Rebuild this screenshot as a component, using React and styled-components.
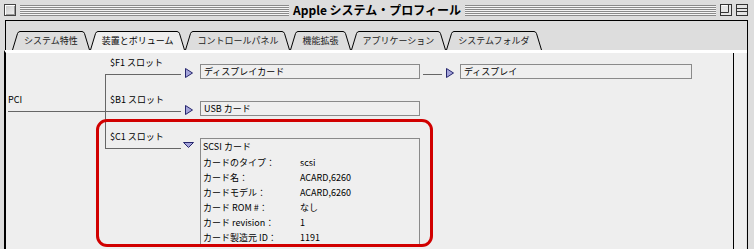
import React from "react"
import styled, { createGlobalStyle } from "styled-components"

const GlobalStyle = createGlobalStyle`
  *, *::before, *::after { box-sizing: border-box; }
  html, body { margin: 0; padding: 0; background: #dddddd; }
  body {
    font-family: "Noto Sans CJK JP", "Noto Sans", sans-serif;
    color: #000;
  }
`

const tabs = [
  "システム特性",
  "装置とボリューム",
  "コントロールパネル",
  "機能拡張",
  "アプリケーション",
  "システムフォルダ",
]

const details = [
  ["カードのタイプ：", "scsi"],
  ["カード名：", "ACARD,6260"],
  ["カードモデル：", "ACARD,6260"],
  ["カード ROM #：", "なし"],
  ["カード revision：", "1"],
  ["カード製造元 ID：", "1191"],
]

const RightArrow = () => (
  <svg width="8" height="10" viewBox="0 0 8 10">
    <polygon points="0.5,0.5 7.5,5 0.5,9.5" fill="#a4a4da" stroke="#26266e" />
  </svg>
)

const DownArrow = () => (
  <svg width="11" height="6" viewBox="0 0 11 6">
    <polygon points="0.5,0.5 10.5,0.5 5.5,5.5" fill="#a4a4da" stroke="#26266e" />
  </svg>
)

const ZoomIcon = () => (
  <svg width="12" height="12" viewBox="0 0 12 12">
    <rect x="0.5" y="0.5" width="11" height="11" fill="#e4e4e4" stroke="#333" />
    <path d="M0.5,8.5 H8.5 V0.5" fill="none" stroke="#333" />
    <path d="M1.5,1.5 H7.5" stroke="#fff" />
  </svg>
)

const ShadeIcon = () => (
  <svg width="12" height="12" viewBox="0 0 12 12">
    <rect x="0.5" y="0.5" width="11" height="11" fill="#e4e4e4" stroke="#333" />
    <path d="M0.5,4.5 H11.5 M0.5,7.5 H11.5" stroke="#333" />
  </svg>
)

const Tab = ({ label, active }) => {
  const fill = active ? "#eeeeee" : "#dddddd"
  return (
    <TabShape>
      <svg width="8" height="19" viewBox="0 0 8 19">
        <path d="M0,19 L5.5,2.5 Q6.3,0.5 8,0.5 L8,19 Z" fill={fill} />
        <path d="M0.5,19 L5.5,2.5 Q6.3,0.5 8,0.5" fill="none" stroke="#000" />
      </svg>
      <TabLabel $active={active}>{label}</TabLabel>
      <svg width="8" height="19" viewBox="0 0 8 19">
        <path d="M0,0.5 Q1.7,0.5 2.5,2.5 L8,19 L0,19 Z" fill={fill} />
        <path d="M0,0.5 Q1.7,0.5 2.5,2.5 L7.5,19" fill="none" stroke="#000" />
      </svg>
    </TabShape>
  )
}

const App = () => {
  return (
    <>
      <GlobalStyle />
      <Window>
        <TitleBar>
          <Cap>
            <CloseBox />
            <Stripes />
          </Cap>
          <Title>Apple システム・プロフィール</Title>
          <Cap $right>
            <Stripes />
            <ZoomIcon />
            <ShadeIcon />
          </Cap>
        </TitleBar>

        <Frame>
          <TabRow>
            {tabs.map(t => (
              <Tab key={t} label={t} active={t === "装置とボリューム"} />
            ))}
          </TabRow>

          <Panel>
            <Content>
              <Tree>
                <Root>PCI</Root>
                <SlotList>
                  <SlotRow>
                    <Branch $pos="first">$F1 スロット</Branch>
                    <ArrowCell $pad={4}>
                      <RightArrow />
                    </ArrowCell>
                    <NameBox $w={220}>ディスプレイカード</NameBox>
                    <Link />
                    <ArrowCell $pad={4} $w={18}>
                      <RightArrow />
                    </ArrowCell>
                    <NameBox $w={232}>ディスプレイ</NameBox>
                  </SlotRow>

                  <SlotRow>
                    <Branch $pos="middle">$B1 スロット</Branch>
                    <ArrowCell $pad={4}>
                      <RightArrow />
                    </ArrowCell>
                    <NameBox $w={220}>USB カード</NameBox>
                  </SlotRow>

                  <SlotRow>
                    <Branch $pos="last">$C1 スロット</Branch>
                    <ArrowCell $pad={2}>
                      <DownArrow />
                    </ArrowCell>
                    <DetailBox>
                      <DetailTitle>SCSI カード</DetailTitle>
                      <DetailGrid>
                        {details.map(([k, v]) => (
                          <React.Fragment key={k}>
                            <span>{k}</span>
                            <span>{v}</span>
                          </React.Fragment>
                        ))}
                      </DetailGrid>
                    </DetailBox>
                  </SlotRow>
                </SlotList>
              </Tree>
              <Highlight />
            </Content>
            <ScrollStrip />
          </Panel>
        </Frame>
      </Window>
    </>
  )
}

const Window = styled.div`
  width: 754px;
  height: 249px;
  overflow: hidden;
  display: flex;
  flex-direction: column;
  background: #dddddd;
`

const TitleBar = styled.div`
  height: 20px;
  display: grid;
  grid-template-columns: 1fr auto 1fr;
  align-items: center;
`

const Cap = styled.div`
  display: flex;
  align-items: center;
  gap: 4px;
  padding: ${p => (p.$right ? "0 6px 0 0" : "0 0 0 4px")};
`

const CloseBox = styled.div`
  width: 12px;
  height: 12px;
  border: 1px solid #444;
  background: linear-gradient(135deg, #c8c8c8, #f2f2f2);
  box-shadow: inset 1px 1px #fff, inset -1px -1px #999;
`

const Stripes = styled.div`
  flex: 1;
  height: 11px;
  background: repeating-linear-gradient(
    to bottom,
    #8a8a8a 0 1px,
    #f4f4f4 1px 2px
  );
`

const Title = styled.div`
  font-size: 12px;
  font-weight: bold;
  line-height: 20px;
  padding: 0 4px;
  white-space: nowrap;
`

const Frame = styled.div`
  flex: 1;
  min-height: 0;
  display: flex;
  flex-direction: column;
  margin: 0 6px 0 5px;
  border: 1px solid #000;
  border-bottom: none;
`

const TabRow = styled.div`
  height: 29px;
  display: flex;
  align-items: flex-end;
  padding-left: 6px;
`

const TabShape = styled.div`
  display: flex;
  height: 19px;
  svg {
    display: block;
  }
`

const TabLabel = styled.div`
  height: 19px;
  padding: 0 4px;
  border-top: 1px solid #000;
  background: ${p => (p.$active ? "#eeeeee" : "#dddddd")};
  color: ${p => (p.$active ? "#000" : "#222")};
  font-size: 9px;
  line-height: 18px;
  white-space: nowrap;
`

const Panel = styled.div`
  flex: 1;
  min-height: 0;
  display: flex;
  margin-left: -2px;
  border-left: 2px solid #000;
  border-top: 3px solid #fff;
`

const Content = styled.div`
  flex: 1;
  position: relative;
  overflow: hidden;
  background: #eeeeee;
  border-right: 1px solid #000;
`

const ScrollStrip = styled.div`
  width: 13px;
  background: #eeeeee;
  border-right: 1px solid #e2e2e2;
`

const Tree = styled.div`
  display: flex;
  align-items: flex-start;
  padding-top: 3px;
  font-size: 9px;
  line-height: 10px;
  white-space: nowrap;
`

const Root = styled.div`
  width: 97px;
  height: 56px;
  margin-left: 2px;
  display: flex;
  align-items: flex-end;
  padding-bottom: 6px;
  border-bottom: 1px solid #666;
`

const SlotList = styled.div`
  display: flex;
  flex-direction: column;
  gap: 14px;
`

const SlotRow = styled.div`
  display: flex;
  align-items: flex-start;
`

const Branch = styled.div`
  position: relative;
  width: 76px;
  flex-shrink: 0;
  align-self: stretch;
  padding: 2px 0 0 5px;

  &::after {
    content: "";
    position: absolute;
    left: 0;
    right: 0;
    top: 18px;
    border-top: 1px solid #666;
  }

  &::before {
    content: "";
    position: absolute;
    left: 0;
    border-left: 1px solid #666;
    top: ${p => (p.$pos === "first" ? "18px" : "0")};
    ${p => (p.$pos === "last" ? "height: 19px;" : "bottom: -14px;")}
  }
`

const ArrowCell = styled.div`
  width: ${p => p.$w || 19}px;
  flex-shrink: 0;
  display: flex;
  padding: 12px 0 0 ${p => p.$pad}px;
  svg {
    display: block;
  }
`

const NameBox = styled.div`
  width: ${p => p.$w}px;
  height: 15px;
  margin-top: 8px;
  padding-left: 3px;
  border: 1px solid #8a8a8a;
  background: #efefef;
  line-height: 13px;
`

const Link = styled.div`
  width: 19px;
  margin: 18px 0 0 3px;
  border-top: 1px solid #666;
`

const DetailBox = styled.div`
  width: 220px;
  margin-top: 8px;
  padding: 0 2px;
  border: 1px solid #8a8a8a;
  background: #efefef;
`

const DetailTitle = styled.div`
  line-height: 16px;
`

const DetailGrid = styled.div`
  display: grid;
  grid-template-columns: 97px 1fr;
  line-height: 15px;
`

const Highlight = styled.div`
  position: absolute;
  left: 90px;
  top: 66px;
  width: 337px;
  height: 128px;
  border: 3px solid #d10000;
  border-radius: 11px;
  pointer-events: none;
`

export default App
